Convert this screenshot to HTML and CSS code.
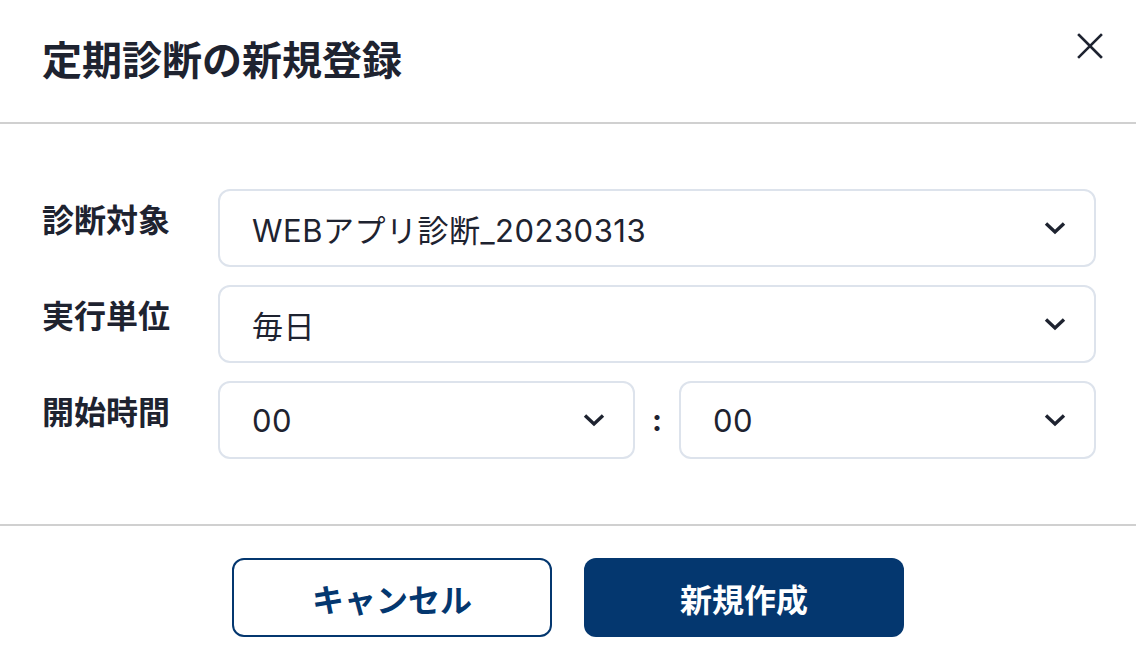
FILE: index.html
```html
<!DOCTYPE html>
<html lang="ja">
  <head>
    <meta charset="UTF-8" />
    <meta name="viewport" content="width=device-width, initial-scale=1.0" />
    <title>定期診断の新規登録</title>
    <link rel="stylesheet" href="styles.css">
  </head>
  <body>
    <div class="modal">
      <header class="modal-header flex v-center space-between">
        <h1 class="modal-title">定期診断の新規登録</h1>
        <button class="close-btn" aria-label="閉じる">
          <svg width="26" height="26" viewBox="0 0 26 26" fill="none" stroke="currentColor" stroke-width="2.6" stroke-linecap="square">
            <path d="M2 2L24 24M24 2L2 24" />
          </svg>
        </button>
      </header>

      <div class="modal-body">
        <div class="form-row">
          <label class="form-label">診断対象</label>
          <div class="select">
            <span>WEBアプリ診断_20230313</span>
            <svg class="chevron" width="22" height="14" viewBox="0 0 22 14" fill="none" stroke="currentColor" stroke-width="3.4"><path d="M2 2.5L11 11L20 2.5" /></svg>
          </div>
        </div>
        <div class="form-row">
          <label class="form-label">実行単位</label>
          <div class="select">
            <span>毎日</span>
            <svg class="chevron" width="22" height="14" viewBox="0 0 22 14" fill="none" stroke="currentColor" stroke-width="3.4"><path d="M2 2.5L11 11L20 2.5" /></svg>
          </div>
        </div>
        <div class="form-row">
          <label class="form-label">開始時間</label>
          <div class="time-group flex v-center">
            <div class="select">
              <span>00</span>
              <svg class="chevron" width="22" height="14" viewBox="0 0 22 14" fill="none" stroke="currentColor" stroke-width="3.4"><path d="M2 2.5L11 11L20 2.5" /></svg>
            </div>
            <span class="colon">:</span>
            <div class="select">
              <span>00</span>
              <svg class="chevron" width="22" height="14" viewBox="0 0 22 14" fill="none" stroke="currentColor" stroke-width="3.4"><path d="M2 2.5L11 11L20 2.5" /></svg>
            </div>
          </div>
        </div>
      </div>

      <footer class="modal-footer flex h-center">
        <button class="btn btn-outline">キャンセル</button>
        <button class="btn btn-primary">新規作成</button>
      </footer>
    </div>
  </body>
</html>
```

FILE: styles.css
```css
*,
*::before,
*::after {
  box-sizing: border-box;
}
:root {
  --clr-text: #1e2330;
  --clr-navy: #04376f;
  --clr-border: #dde3ec;
  --clr-divider: #d0d0d0;
  --ff-base: Inter, "Noto Sans CJK JP", sans-serif;
  --ff-jp: "Noto Sans CJK JP", sans-serif;
}
body {
  margin: 0;
  min-height: 100vh;
  font-family: var(--ff-base);
  color: var(--clr-text);
  background-color: #fff;
  overflow: hidden;
}
.flex {
  display: flex;
}
.v-center {
  align-items: center;
}
.h-center {
  justify-content: center;
}
.space-between {
  justify-content: space-between;
}
.modal-header {
  height: 124px;
  padding: 0 33px 2px 42px;
  border-bottom: 2px solid var(--clr-divider);
}
.modal-title {
  margin: 0;
  font-family: var(--ff-jp);
  font-size: 40px;
  font-weight: 700;
  line-height: 1.2;
  margin-top: -4px;
}
.close-btn {
  display: flex;
  padding: 0;
  border: 0;
  background: none;
  color: var(--clr-text);
  cursor: pointer;
  margin-top: -29px;
}
.modal-body {
  display: flex;
  flex-direction: column;
  gap: 18px;
  padding: 65px 40px 65px 42px;
  border-bottom: 2px solid var(--clr-divider);
}
.form-row {
  display: grid;
  grid-template-columns: 176px 1fr;
  align-items: start;
}
.form-label {
  font-family: var(--ff-jp);
  font-size: 32px;
  font-weight: 700;
  line-height: 48px;
  padding-top: 5px;
}
.select {
  flex: 1;
  display: flex;
  align-items: center;
  justify-content: space-between;
  height: 78px;
  padding: 0 28px 0 32px;
  border: 2px solid var(--clr-border);
  border-radius: 12px;
  font-size: 31px;
  letter-spacing: 0.5px;
  color: var(--clr-text);
}
.chevron {
  flex-shrink: 0;
}
.colon {
  width: 44px;
  text-align: center;
  font-size: 30px;
  font-weight: 700;
}
.modal-footer {
  gap: 32px;
  padding-top: 32px;
}
.btn {
  width: 320px;
  height: 79px;
  border-radius: 12px;
  font-family: var(--ff-jp);
  font-size: 32px;
  font-weight: 700;
  cursor: pointer;
}
.btn-outline {
  background-color: #fff;
  color: var(--clr-navy);
  border: 2px solid var(--clr-navy);
}
.btn-primary {
  background-color: var(--clr-navy);
  color: #fff;
  border: 0;
}
```
